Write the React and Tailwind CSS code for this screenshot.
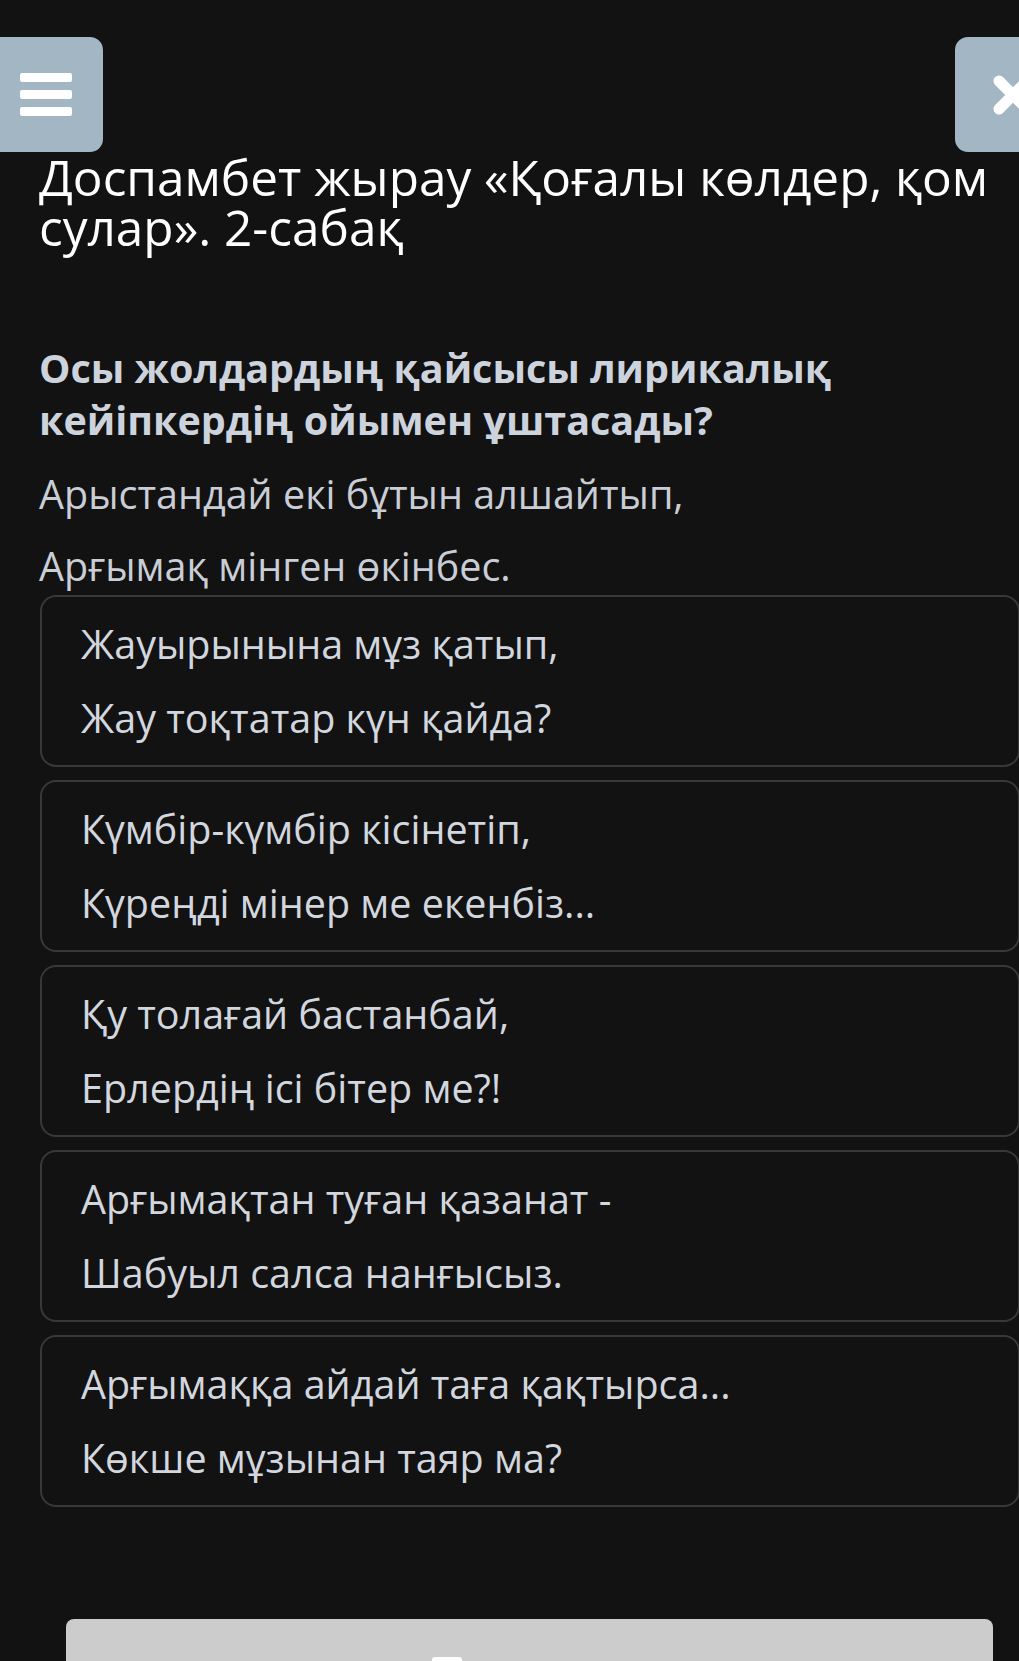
import React from 'react';

const options = [
  ['Жауырынына мұз қатып,', 'Жау тоқтатар күн қайда?'],
  ['Күмбір-күмбір кісінетіп,', 'Күреңді мінер ме екенбіз...'],
  ['Қу толағай бастанбай,', 'Ерлердің ісі бітер ме?!'],
  ['Арғымақтан туған қазанат -', 'Шабуыл салса нанғысыз.'],
  ['Арғымаққа айдай таға қақтырса...', 'Көкше мұзынан таяр ма?'],
];

export default function App() {
  return (
    <div className="min-h-screen w-[1019px] overflow-hidden bg-[#121212] font-['Open_Sans','Noto_Sans',sans-serif]">
      {/* Top buttons */}
      <div className="pt-[37px]">
        <div className="flex justify-between -ml-[12px] w-[1082px]">
          <button className="w-[115px] h-[115px] bg-[#a3b6c3] rounded-[13px] flex flex-col items-center justify-center gap-[8px]">
            <span className="block w-[52px] h-[9px] bg-white rounded-[2px]" />
            <span className="block w-[52px] h-[9px] bg-white rounded-[2px]" />
            <span className="block w-[52px] h-[9px] bg-white rounded-[2px]" />
          </button>
          <button className="w-[115px] h-[115px] bg-[#a3b6c3] rounded-[13px] flex items-center justify-center">
            <svg width="48" height="48" viewBox="0 0 48 48">
              <path d="M10 10 L38 38 M38 10 L10 38" stroke="#fff" strokeWidth="11" strokeLinecap="round" />
            </svg>
          </button>
        </div>
      </div>

      <main className="pl-[39px] w-[1019px]">
        <h1 className="text-[49.5px] leading-[50px] text-white font-normal">
          Доспамбет жырау «Қоғалы көлдер, қом сулар». 2-сабақ
        </h1>

        <h2 className="mt-[90px] text-[39.5px] leading-[52px] font-bold text-[#cdd3dd] pr-[120px]">
          Осы жолдардың қайсысы лирикалық кейіпкердің ойымен ұштасады?
        </h2>

        <div className="mt-[22px] text-[39.5px] leading-[52px] text-[#c9ced6]">
          <p>Арыстандай екі бұтын алшайтып,</p>
          <p className="mt-[20px]">Арғымақ мінген өкінбес.</p>
        </div>

        <div className="mt-[3px] ml-px flex flex-col gap-[13px]">
          {options.map((o, i) => (
            <div key={i} className="w-[980px] shrink-0 border-2 border-[#383838] rounded-[16px] px-[39px] py-[10px] text-[39.5px] leading-[74px] text-[#d2d7df]">
              <p>{o[0]}</p>
              <p>{o[1]}</p>
            </div>
          ))}
        </div>

        <div className="mt-[112px] ml-[27px] w-[927px] h-[80px] bg-[#cccccc] rounded-t-[8px] pt-[38px] pl-[366px]">
          <div className="w-[30px] h-[10px] bg-white rounded-t-[3px]" />
        </div>
      </main>
    </div>
  );
}
